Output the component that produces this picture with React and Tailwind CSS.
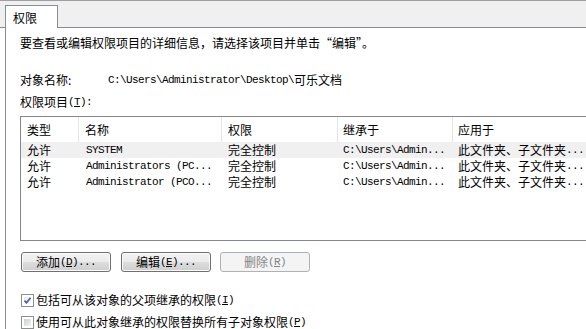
const mono = "font-['Liberation_Mono','Noto_Sans_CJK_SC',monospace] text-[11px] tracking-[-0.6px]";

const rows = [
  { type: "允许", name: "SYSTEM", perm: "完全控制" },
  { type: "允许", name: "Administrators (PC...", perm: "完全控制" },
  { type: "允许", name: "Administrator (PCO...", perm: "完全控制" },
];

function Btn({ label, hot, tail, disabled }) {
  return (
    <button
      className={
        disabled
          ? "w-[90px] h-[20px] rounded-[3px] border border-[#adb2b5] bg-[#f4f4f4] text-[#838383] flex items-center justify-center"
          : "w-[90px] h-[20px] rounded-[3px] border border-[#707070] shadow-[inset_0_0_0_1px_#fcfcfc] bg-[linear-gradient(to_bottom,#f2f2f2_0%,#ebebeb_50%,#dddddd_50%,#cfcfcf_100%)] flex items-center justify-center"
      }
    >
      <span>{label}</span>
      <span className={mono}>
        (<u>{hot}</u>){tail}
      </span>
    </button>
  );
}

function Check({ checked, children, hot }) {
  return (
    <div className="h-[16px] flex items-center">
      <div className="ml-[1px] w-[13px] h-[13px] border border-[#8e8f8f] bg-white p-[2px]">
        <div
          className={
            checked
              ? "w-full h-full bg-[linear-gradient(135deg,#e8ebef,#fbfbfb)]"
              : "w-full h-full bg-[linear-gradient(135deg,#cbcfd5,#f4f4f4)]"
          }
        >
          {checked && (
            <svg viewBox="0 0 7 7" className="w-[7px] h-[7px]">
              <path d="M0.5 3.5 L2.5 5.8 L6.5 0.8" fill="none" stroke="#4a5f97" strokeWidth="1.6" />
            </svg>
          )}
        </div>
      </div>
      <span className="ml-[2px]">{children}</span>
      <span className={mono}>
        (<u>{hot}</u>)
      </span>
    </div>
  );
}

export default function App() {
  return (
    <div className="w-[586px] h-[329px] overflow-hidden bg-white text-black font-['Noto_Sans_CJK_SC',sans-serif] text-[12px] leading-[16px] flex flex-col">
      {/* tab strip */}
      <div className="h-[28px] shrink-0 bg-[#f0f0f0] border-t border-t-[#a0a0a0] border-b border-b-[#898c95] flex items-end pl-[5px]">
        <div className="relative -mb-px h-[23px] w-[53px] bg-white border border-b-0 border-[#898c95] pl-[7px] pt-[4px]">
          权限
        </div>
      </div>

      {/* panel */}
      <div className="flex-1 ml-[5px] border-l border-[#898c95] pl-[14px]">
        <div className="mt-[7px] whitespace-nowrap">
          要查看或编辑权限项目的详细信息，请选择该项目并单击“编辑”。
        </div>
        <div className="mt-[21px] flex whitespace-nowrap">
          <span className="w-[88px]">对象名称:</span>
          <span className={mono}>C:\Users\Administrator\Desktop\</span>
          <span>可乐文档</span>
        </div>
        <div className="mt-[6px] flex">
          <span>权限项目</span>
          <span className={mono}>
            (<u>T</u>):
          </span>
        </div>

        {/* list */}
        <div className="mt-[6px] w-[600px] h-[125px] border border-[#828790] whitespace-nowrap">
          <div className="h-[25px] flex">
            <div className="w-[58px] border-r border-[#e5e5e5] pl-[6px] flex items-center">类型</div>
            <div className="w-[143px] border-r border-[#e5e5e5] pl-[6px] flex items-center">名称</div>
            <div className="w-[116px] border-r border-[#e5e5e5] pl-[6px] flex items-center">权限</div>
            <div className="w-[115px] border-r border-[#e5e5e5] pl-[5px] flex items-center">继承于</div>
            <div className="flex-1 pl-[5px] flex items-center">应用于</div>
          </div>
          {rows.map((r, i) => (
            <div key={i} className={i === 0 ? "h-[16px] flex items-center bg-[#f0f0f0]" : "h-[16px] flex items-center"}>
              <div className="w-[58px] pl-[6px]">{r.type}</div>
              <div className={"w-[143px] pl-[7px] " + mono}>{r.name}</div>
              <div className="w-[116px] pl-[6px]">{r.perm}</div>
              <div className={"w-[115px] pl-[5px] " + mono}>C:\Users\Admin...</div>
              <div className="flex-1 pl-[5px] flex">
                <span>此文件夹、子文件夹</span>
                <span className={mono}>...</span>
              </div>
            </div>
          ))}
        </div>

        {/* buttons */}
        <div className="mt-[11px] flex pl-[1px]">
          <Btn label="添加" hot="D" tail="..." />
          <div className="ml-[10px]">
            <Btn label="编辑" hot="E" tail="..." />
          </div>
          <div className="ml-[9px]">
            <Btn label="删除" hot="R" tail="" disabled />
          </div>
        </div>

        {/* checkboxes */}
        <div className="mt-[20px] flex flex-col gap-[6px]">
          <Check checked hot="I">包括可从该对象的父项继承的权限</Check>
          <Check hot="P">使用可从此对象继承的权限替换所有子对象权限</Check>
        </div>
      </div>
    </div>
  );
}
